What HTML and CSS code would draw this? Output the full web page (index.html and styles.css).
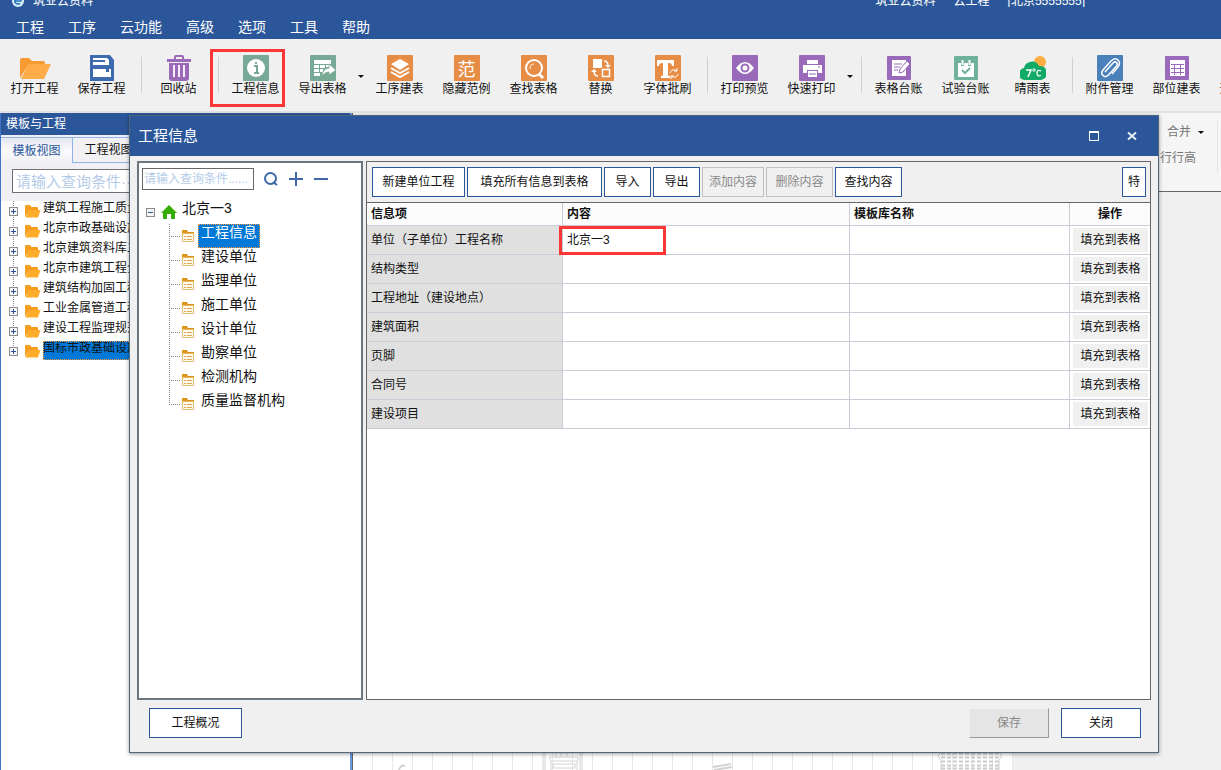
FILE: index.html
```html
<!DOCTYPE html>
<html lang="zh-CN">
<head>
<meta charset="utf-8">
<title>筑业云资料</title>
<link rel="stylesheet" href="styles.css">
</head>
<body>
<svg class="defs" aria-hidden="true">
  <symbol id="folder" viewBox="0 0 17 14"><path d="M1 13V2q0-1 1-1h4l1.500 2H13q1 0 1 1v2H5z" fill="#f79d1e"/><path d="M1.500 13.500 4.500 6H16.500l-2.500 7.500z" fill="#ffac2b"/></symbol>
  <symbol id="form" viewBox="0 0 12 12"><path d="M0 0h5l1 2h6v2H0z" fill="#dc9612"/><path d="M.5 3.500h11v8H.5z" fill="#fffaf0" stroke="#e5bd72"/><path d="M2 6.500h2M5 6.500h5M2 9.500h2M5 9.500h5" stroke="#dca94a"/></symbol>
</svg>
<header class="app-head">
  <div class="title-row">
    <svg class="logo" viewBox="0 0 12 12"><circle cx="6" cy="6" r="6" fill="#d8ecf8"/><path d="M3 6h6c0-4-5-4-6-1s2 5 5 3.500" fill="none" stroke="#2573b8" stroke-width="1.500"/></svg>
    <span class="app-name">筑业云资料</span>
    <span class="doc-name"><span>筑业云资料</span><span>云工程</span><span>[北京5555555]</span></span>
  </div>
  <nav class="menu">
    <button>工程</button><button>工序</button><button>云功能</button><button>高级</button><button>选项</button><button>工具</button><button>帮助</button>
  </nav>
</header>
<div class="toolbar">
  <button class="tool"><svg viewBox="0 0 32 26" class="wide"><path d="M1 23V5q0-2 2-2h7l3 3h11q2 0 2 2v2H9z" fill="#f99b33"/><path d="M2 24 9 9H32l-7 15z" fill="#ffab48"/></svg>打开工程</button>
  <button class="tool"><svg viewBox="0 0 26 26"><path d="M1 0h20l4 5v21H1z" fill="#3e6ab0"/><path d="M4 3h14l2 2v5H4zM4 14h18v8H4z" fill="#fff"/><path d="M4 5h12v2H4zM17 14h3v3h-3z" fill="#3e6ab0"/></svg>保存工程</button>
  <i class="sep"></i>
  <button class="tool"><svg viewBox="0 0 26 26"><path d="M8 4V2q0-2 2-2h6q2 0 2 2v2h7v3H1V4zM10 4h6V2h-6zM3 8h20v15q0 3-3 3H6q-3 0-3-3z" fill="#9a6ab8" fill-rule="evenodd"/><path d="M8 10v12M13 10v12M18 10v12" stroke="#f6effa" stroke-width="2"/></svg>回收站</button>
  <i class="sep"></i>
  <button class="tool marked"><svg viewBox="0 0 26 26"><rect width="26" height="26" rx="1" fill="#77a996"/><circle cx="13" cy="13" r="9" fill="#fff"/><path d="M11 11h3v7M11 18h5M12 8h2" stroke="#77a996" stroke-width="2" fill="none"/></svg>工程信息</button>
  <button class="tool"><svg viewBox="0 0 26 26"><rect width="26" height="26" rx="1" fill="#77a996"/><path d="M4 5h17v4H4zM4 10h5v3H4zM10 10h5v3h-5zM4 14h5v3H4zM4 18h6v3H4zM10 14h3v3h-3zM16 10h5v2h-5z" fill="#fff"/><path d="M12 21q1-8 7-8V9l7 6-7 5v-3q-4 0-7 4z" fill="#fff" stroke="#77a996" stroke-width=".8"/></svg>导出表格</button>
  <button class="drop" aria-label="导出选项"></button>
  <button class="tool"><svg viewBox="0 0 26 26"><rect width="26" height="26" rx="1" fill="#e78c45"/><path d="m13 4 9 5-9 6-9-6z" fill="#fff"/><path d="m4 13 9 5 9-5M4 17l9 5 9-5" fill="none" stroke="#fff" stroke-width="2"/></svg>工序建表</button>
  <button class="tool"><span class="glyph">范</span>隐藏范例</button>
  <button class="tool"><svg viewBox="0 0 26 26"><rect width="26" height="26" rx="1" fill="#e78c45"/><circle cx="13" cy="13" r="8" fill="none" stroke="#fff" stroke-width="2"/><path d="m18 19 4 4" stroke="#fff" stroke-width="3"/><path d="M9 14q0-5 4-5" stroke="#fff" fill="none"/></svg>查找表格</button>
  <button class="tool"><svg viewBox="0 0 26 26"><rect width="26" height="26" rx="1" fill="#e78c45"/><path d="M5 4h9v9H5z" fill="#fff"/><path d="M14.500 14.500h7v7h-7zM16 6q4 0 4 5M10 21q-4 0-4-5" fill="none" stroke="#fff" stroke-width="1.500"/><path d="M17 10h6l-3 3zM3 17h6l-3-3z" fill="#fff"/></svg>替换</button>
  <button class="tool"><svg viewBox="0 0 26 26"><rect width="26" height="26" rx="1" fill="#e78c45"/><path d="M2 5h17v6h-2q0-3-3-3h-1v12q0 1 2 1v2H6v-2q2 0 2-1V8H7q-3 0-3 3H2z" fill="#fff"/><path d="M15 18q1-4 5-3l2 1M23 19q-1 4-5 3l-2-1M22 13v3h-3M16 24v-3h3" fill="none" stroke="#fff"/></svg>字体批刷</button>
  <i class="sep"></i>
  <button class="tool"><svg viewBox="0 0 26 26"><rect width="26" height="26" rx="1" fill="#986ab9"/><path d="M4 13q9-12 18 0q-9 12-18 0z" fill="#fff"/><circle cx="13" cy="13" r="3.500" fill="none" stroke="#986ab9" stroke-width="2"/></svg>打印预览</button>
  <button class="tool"><svg viewBox="0 0 26 26"><rect width="26" height="26" rx="1" fill="#986ab9"/><path d="M8 5h11v4H8zM4 10h19v8h-4v-3H8v3H4zM9 16h9v6H9z" fill="#fff"/><path d="M19 12h2M10 19h7" stroke="#986ab9"/></svg>快速打印</button>
  <button class="drop" aria-label="打印选项"></button>
  <i class="sep"></i>
  <button class="tool"><svg viewBox="0 0 26 26"><rect x="1" y="1" width="24" height="24" rx="1" fill="#986ab9"/><path d="M6 5h14v16H6z" fill="#fff"/><path d="M8 9h8M8 12h6M8 15h4" stroke="#986ab9"/><path d="m13 18 1-4 7-8 3 3-7 8z" fill="#fff" stroke="#986ab9"/></svg>表格台账</button>
  <button class="tool"><svg viewBox="0 0 26 26"><rect x="1" y="1" width="24" height="24" rx="1" fill="#6fb299"/><path d="M5 8h3v3h3V8h4v3h3V8h3v14H5z" fill="#fff"/><path d="M9.500 5v5M16.500 5v5" stroke="#fff" stroke-width="2"/><path d="m9 15 3 3 5-5" stroke="#6fb299" stroke-width="2" fill="none"/></svg>试验台账</button>
  <button class="tool"><svg viewBox="0 0 26 26"><circle cx="20" cy="7" r="6" fill="#ffad42"/><path d="M6 25a6 6 0 0 1-2-12 8 8 0 0 1 15-2 7 7 0 0 1 2 14z" fill="#12aa67"/><path d="M6 15h5l-3 7" fill="none" stroke="#fff" stroke-width="1.500"/><circle cx="14" cy="15" r="1.200" fill="none" stroke="#fff"/><path d="M21 16q-4-2-4 2t4 2.500" fill="none" stroke="#fff" stroke-width="1.300"/></svg>晴雨表</button>
  <i class="sep"></i>
  <button class="tool"><svg viewBox="0 0 26 26"><rect width="26" height="26" rx="1" fill="#4a81bb"/><path d="m8 17 8-9q2-2 3.500-.5t0 3.500l-8 9q-3 3-5.500.5t0-5.500L14 6q4-4 7-1t0 7l-6 7" fill="none" stroke="#fff" stroke-width="1.500"/></svg>附件管理</button>
  <button class="tool"><svg viewBox="0 0 26 26"><rect x="1" y="1" width="24" height="24" rx="1" fill="#986ab9"/><path d="M6 5h15v16H6z" fill="#fff"/><path d="M7 9.500h13M7 13.500h13M7 17.500h13M10.500 9v11M16.500 9v11" stroke="#986ab9"/></svg>部位建表</button>
  <button class="tool">开始管理</button>
</div>
<main class="work">
  <aside class="side">
    <h2>模板与工程</h2>
    <div class="tabs"><button class="on">模板视图</button><button>工程视图</button></div>
    <div class="side-search"><input aria-label="查询模板" placeholder="请输入查询条件······"></div>
    <ul class="side-tree">
      <li><button class="box plus" aria-label="展开"></button><svg><use href="#folder"/></svg><span>建筑工程施工质量验收</span></li>
      <li><button class="box plus" aria-label="展开"></button><svg><use href="#folder"/></svg><span>北京市政基础设施工程</span></li>
      <li><button class="box plus" aria-label="展开"></button><svg><use href="#folder"/></svg><span>北京建筑资料库二级</span></li>
      <li><button class="box plus" aria-label="展开"></button><svg><use href="#folder"/></svg><span>北京市建筑工程全套</span></li>
      <li><button class="box plus" aria-label="展开"></button><svg><use href="#folder"/></svg><span>建筑结构加固工程</span></li>
      <li><button class="box plus" aria-label="展开"></button><svg><use href="#folder"/></svg><span>工业金属管道工程</span></li>
      <li><button class="box plus" aria-label="展开"></button><svg><use href="#folder"/></svg><span>建设工程监理规范</span></li>
      <li><button class="box plus" aria-label="展开"></button><svg><use href="#folder"/></svg><span class="picked">国标市政基础设施工程</span></li>
    </ul>
  </aside>
  <section class="doc">
    <div class="ribbon">
      <div class="ribbon-group"><button>合并<i class="caret"></i></button><button>行行高</button></div>
    </div>
    <div class="sheet">
      <svg class="sketch" viewBox="0 0 660 20" preserveAspectRatio="xMidYMax meet">
        <g fill="none" stroke="#d2d2d2"><path d="M190 0v20M192 0v20M227 0v20M229 0v20M197 7h28v4h-28zM203 0v7M208 0v7M214 0v7M198 12v8M224 12v8M200 14h22v4h-22z"/><path d="M46 20q2-6 6-4M360 17l18-3M361 20l18-3" stroke-width="2"/><path d="M588 3.500h58M588 7.500h58M588 11.500h58M588 15.500h58M588 18.500h58" stroke="#ccc" stroke-width="2" stroke-dasharray="4 2"/><path d="M588 2q-5 4 0 8v10M646 2q5 4 0 8v10"/></g>
      </svg>
    </div>
  </section>
</main>

<div class="dialog" role="dialog" aria-labelledby="dlg-title">
  <div class="dlg-head">
    <h1 id="dlg-title">工程信息</h1>
    <button aria-label="最大化"><svg viewBox="0 0 10 10"><path d="M.5 1h9v8.500h-9z" fill="none" stroke="#fff"/><path d="M0 1h10" stroke="#fff" stroke-width="2"/></svg></button>
    <button aria-label="关闭窗口"><svg viewBox="0 0 10 10"><path d="m1 1.500 8 7M9 1.500l-8 7" stroke="#e6ecf5" stroke-width="2"/></svg></button>
  </div>
  <div class="dlg-body">
    <div class="nav-pane">
      <div class="nav-search">
        <input aria-label="查询信息" placeholder="请输入查询条件......">
        <button aria-label="查询"><svg viewBox="0 0 16 16"><circle cx="7.500" cy="7.500" r="5.500" fill="none" stroke="#3d67a6" stroke-width="2"/><path d="m10 11 4 3" stroke="#3d67a6" stroke-width="2"/></svg></button>
        <button aria-label="展开全部"><svg viewBox="0 0 16 16"><path d="M1 8h14M8 1v14" stroke="#3d67a6" stroke-width="2"/></svg></button>
        <button aria-label="折叠全部"><svg viewBox="0 0 16 16"><path d="M1 8h14" stroke="#3d67a6" stroke-width="2"/></svg></button>
      </div>
      <div class="root"><button class="box" aria-label="折叠"></button><svg viewBox="0 0 16 16"><path d="M8 1 0 9h2v6h4v-5h4v5h4V9h2z" fill="#35ac05"/></svg><span>北京一3</span></div>
      <ul class="nav-tree">
        <li><i></i><svg><use href="#form"/></svg><span class="picked">工程信息</span></li>
        <li><i></i><svg><use href="#form"/></svg><span>建设单位</span></li>
        <li><i></i><svg><use href="#form"/></svg><span>监理单位</span></li>
        <li><i></i><svg><use href="#form"/></svg><span>施工单位</span></li>
        <li><i></i><svg><use href="#form"/></svg><span>设计单位</span></li>
        <li><i></i><svg><use href="#form"/></svg><span>勘察单位</span></li>
        <li><i></i><svg><use href="#form"/></svg><span>检测机构</span></li>
        <li><i></i><svg><use href="#form"/></svg><span>质量监督机构</span></li>
      </ul>
    </div>
    <div class="info-pane">
      <div class="actions">
        <button class="btn wide">新建单位工程</button>
        <button class="btn fill">填充所有信息到表格</button>
        <button class="btn short">导入</button>
        <button class="btn short">导出</button>
        <button class="btn snug" disabled>添加内容</button>
        <button class="btn" disabled>删除内容</button>
        <button class="btn">查找内容</button>
        <button class="btn last">特</button>
      </div>
      <table>
        <colgroup><col class="c-name"><col class="c-content"><col><col class="c-op"></colgroup>
        <thead><tr><th>信息项</th><th>内容</th><th>模板库名称</th><th class="mid">操作</th></tr></thead>
        <tbody>
          <tr><td>单位（子单位）工程名称</td><td class="flagged">北京一3</td><td></td><td><button>填充到表格</button></td></tr>
          <tr><td>结构类型</td><td></td><td></td><td><button>填充到表格</button></td></tr>
          <tr><td>工程地址（建设地点）</td><td></td><td></td><td><button>填充到表格</button></td></tr>
          <tr><td>建筑面积</td><td></td><td></td><td><button>填充到表格</button></td></tr>
          <tr><td>页脚</td><td></td><td></td><td><button>填充到表格</button></td></tr>
          <tr><td>合同号</td><td></td><td></td><td><button>填充到表格</button></td></tr>
          <tr><td>建设项目</td><td></td><td></td><td><button>填充到表格</button></td></tr>
        </tbody>
      </table>
    </div>
  </div>
  <div class="dlg-foot">
    <button class="btn overview">工程概况</button>
    <button class="btn save" disabled>保存</button>
    <button class="btn close">关闭</button>
  </div>
</div>
</body>
</html>
```
FILE: styles.css
```css
*, ::before, ::after { box-sizing: border-box; }
body {
  margin: 0;
  height: 100vh;
  display: flex;
  flex-direction: column;
  position: relative;
  overflow: hidden;
  background: #f0f0f0;
  color: #111;
  font: 12px/16px "Liberation Sans", "Noto Sans CJK SC", sans-serif;
}
button, input { font: inherit; color: inherit; margin: 0; padding: 0; border: 0; background: none; border-radius: 0; }
button { white-space: nowrap; }
h1, h2 { margin: 0; font-weight: normal; }
ul { list-style: none; margin: 0; padding: 0; }
svg { display: block; flex: none; }
.defs { position: absolute; width: 0; height: 0; }

.app-head { flex: none; background: #2b579a; color: #fff; }
.title-row { display: flex; align-items: flex-end; height: 7px; padding-left: 12px; overflow: hidden; line-height: 12px; }
.logo { width: 12px; height: 12px; }
.app-name { margin-left: 9px; }
.doc-name { display: flex; gap: 18px; margin-left: auto; padding-right: 136px; }
.menu { display: flex; gap: 24px; height: 32px; padding: 8px 16px 0; font-size: 14px; line-height: 24px; }

.toolbar {
  flex: none;
  display: flex;
  height: 74px;
  padding: 16px 0 0 1px;
  border-bottom: 2px solid #e2e2e5;
}
.tool { flex: none; display: flex; flex-direction: column; align-items: center; justify-content: flex-end; width: 67px; height: 42px; position: relative; line-height: 16px; }
.tool svg { width: 26px; height: 26px; }
.tool svg.wide { width: 32px; }
.glyph { width: 26px; height: 26px; border-radius: 1px; background: #e78c45; color: #fff; font: 18px/26px "Noto Sans CJK SC", sans-serif; }
.marked::after { content: ""; position: absolute; inset: -6px 4px -10px -12px; border: 3px solid #fb3636; }
.sep { flex: none; width: 1px; height: 36px; margin: 2px 3px 0 6px; background: #d0d0d0; }
.drop { flex: none; width: 10px; height: 42px; display: grid; place-items: center; }
.drop::after, .caret { content: ""; width: 6px; border: 3px solid transparent; border-top-color: #111; border-bottom: 0; }

.work { flex: 1; min-height: 0; display: flex; }
.side { flex: none; width: 352px; display: flex; flex-direction: column; border-left: 1px solid #3f75c8; border-right: 2px solid #6b9ae0; background: #fff; }
.side h2 { height: 22px; padding-left: 5px; background: #2b579a; color: #fff; font-size: 12px; line-height: 22px; }
.tabs { display: flex; padding-top: 2px; background: #f0f0f4; }
.tabs button { width: 72px; height: 26px; border: 1px solid #8fb2e8; border-left: 0; background: #f1f1f4; }
.tabs .on { border-bottom: 0; color: #2b579a; background: linear-gradient(#e4e4ee, #fbfbfd, #f0f0f4); }
.side-search { padding: 6px 11px 8px; background: #f0f0f4; }
.side-search input { display: block; width: 100%; height: 24px; padding: 0 3px; border: 1px solid #707070; font-size: 15px; background: #fff; }
::placeholder { color: #b3cbe8; opacity: 1; }
.side-tree { padding-left: 8px; }
.side-tree li { display: flex; align-items: center; height: 20px; background: repeating-linear-gradient(#888 0 1px, transparent 1px 2px) 4px 0 / 1px 100% no-repeat; }
.side-tree li:last-child { background-size: 1px 50%; }
.side-tree svg { width: 17px; height: 14px; margin-left: 6px; }
.side-tree span { align-self: flex-start; height: 19px; margin-left: 2px; padding-right: 2px; line-height: 15px; }
.box {
  flex: none;
  width: 9px;
  height: 9px;
  border: 1px solid #8b8b8b;
  background: linear-gradient(#2b4f9a, #2b4f9a) center / 5px 1px no-repeat #f5f5f5;
}
.plus { background: linear-gradient(#2b4f9a, #2b4f9a) center / 5px 1px no-repeat, linear-gradient(#2b4f9a, #2b4f9a) center / 1px 5px no-repeat #f5f5f5; }
.picked { background: #0078d7; outline: 1px dotted #f79a3c; outline-offset: -1px; }
.nav-tree .picked { color: #fff; }

.doc { flex: 1; min-width: 0; display: flex; flex-direction: column; border-left: 1px solid #666; }
.ribbon { display: flex; justify-content: flex-end; height: 79px; background: #f5f5f5; border-bottom: 1px solid #666; }
.ribbon-group { display: flex; flex-direction: column; align-items: flex-start; gap: 10px; height: 52px; margin: 8px 3px 0 0; padding-top: 3px; width: 58px; border-right: 1px solid #e3e3e3; color: #757575; }
.ribbon-group button { display: flex; align-items: center; gap: 7px; }
.ribbon-group button:first-child { margin-left: 7px; }
.sheet { flex: 1; margin-right: 208px; display: flex; align-items: flex-end; background: repeating-linear-gradient(to right, transparent 0 19px, #e8e8e8 19px 20px) #fff; }
.sketch { width: 100%; height: 20px; }

.dialog {
  position: absolute;
  inset: 115px 62px 17px 129px;
  display: flex;
  flex-direction: column;
  background: #f0f0f0;
  border: 1px solid #50677b;
  box-shadow: 0 1px 4px rgba(0, 0, 0, .4);
}
.dlg-head { display: flex; align-items: center; height: 40px; padding: 0 21px 0 8px; background: #2b579a; color: #fff; gap: 28px; }
.dlg-head h1 { flex: 1; font-size: 15px; }
.dlg-head svg { width: 10px; height: 10px; }
.dlg-body { flex: 1; min-height: 0; display: flex; gap: 3px; padding: 5px 7px 0; }
.nav-pane { flex: none; width: 226px; border: 2px solid #6a7780; background: #fff; padding: 5px 3px; }
.nav-search { display: flex; align-items: center; gap: 9px; }
.nav-search input { width: 112px; height: 22px; border: 1px solid #666; padding: 0 1px; }
.nav-search svg { width: 16px; height: 16px; }
.root { display: flex; align-items: center; height: 24px; margin-top: 10px; padding-left: 4px; font-size: 14px; }
.root svg { width: 16px; height: 16px; margin-left: 6px; }
.root span, .nav-tree span { align-self: flex-start; height: 24px; line-height: 16px; }
.root span { margin-left: 5px; }
.nav-tree { padding-left: 27px; font-size: 14px; }
.nav-tree li { display: flex; align-items: center; height: 24px; }
.nav-tree i { width: 11px; height: 24px; background: repeating-linear-gradient(#888 0 1px, transparent 1px 2px) 0 0 / 1px 100% no-repeat, repeating-linear-gradient(to right, #888 0 1px, transparent 1px 2px) 0 50% / 100% 1px no-repeat; }
.nav-tree li:last-child i { background-size: 1px 50%, 100% 1px; }
.nav-tree svg { width: 12px; height: 12px; margin: 0 4px 0 2px; }
.nav-tree span { padding: 0 3px; }

.info-pane { flex: 1; min-width: 0; border: 1px solid #666; background: #fff; }
.actions { display: flex; gap: 2px; padding: 5px 4px 5px 5px; background: #f0f0f0; border-bottom: 1px solid #666; }
.btn { height: 30px; border: 1px solid #2b579a; background: #fff; }
.btn:disabled { border-color: #c0c0c0; background: #f0f0f0; color: #888; }
.actions .btn { width: 67px; }
.actions .wide { width: 93px; }
.actions .fill { width: 135px; }
.actions .short { width: 47px; }
.actions .snug { width: 62px; }
.actions .last { width: 24px; margin-left: auto; }
table { width: 100%; table-layout: fixed; border-collapse: separate; border-spacing: 0; }
.c-name { width: 196px; }
.c-content { width: 287px; }
.c-op { width: 80px; }
th, td { height: 29px; padding: 0 4px; border: solid #cacad8; border-width: 0 1px 1px 0; text-align: left; }
th { height: 23px; background: #fcfcfc; }
th:last-child, td:last-child { border-right: 0; }
th.mid { text-align: center; }
td:first-child { background: #e0e0e0; }
td:last-child { padding: 0 2px 0 3px; }
td button { display: block; width: 100%; height: 24px; background: #f0f0f0; }
.flagged { position: relative; }
.flagged::after { content: ""; position: absolute; left: -4px; top: 0; width: 107px; height: 29px; border: 3px solid #fb3636; }

.dlg-foot { display: flex; gap: 12px; padding: 8px 17px 14px 19px; }
.overview { width: 93px; margin-right: auto; }
.save, .close { width: 80px; }
.save:disabled { background: #e5e5e5; border-color: #f0f0f0 #999 #999 #f0f0f0; }
```
